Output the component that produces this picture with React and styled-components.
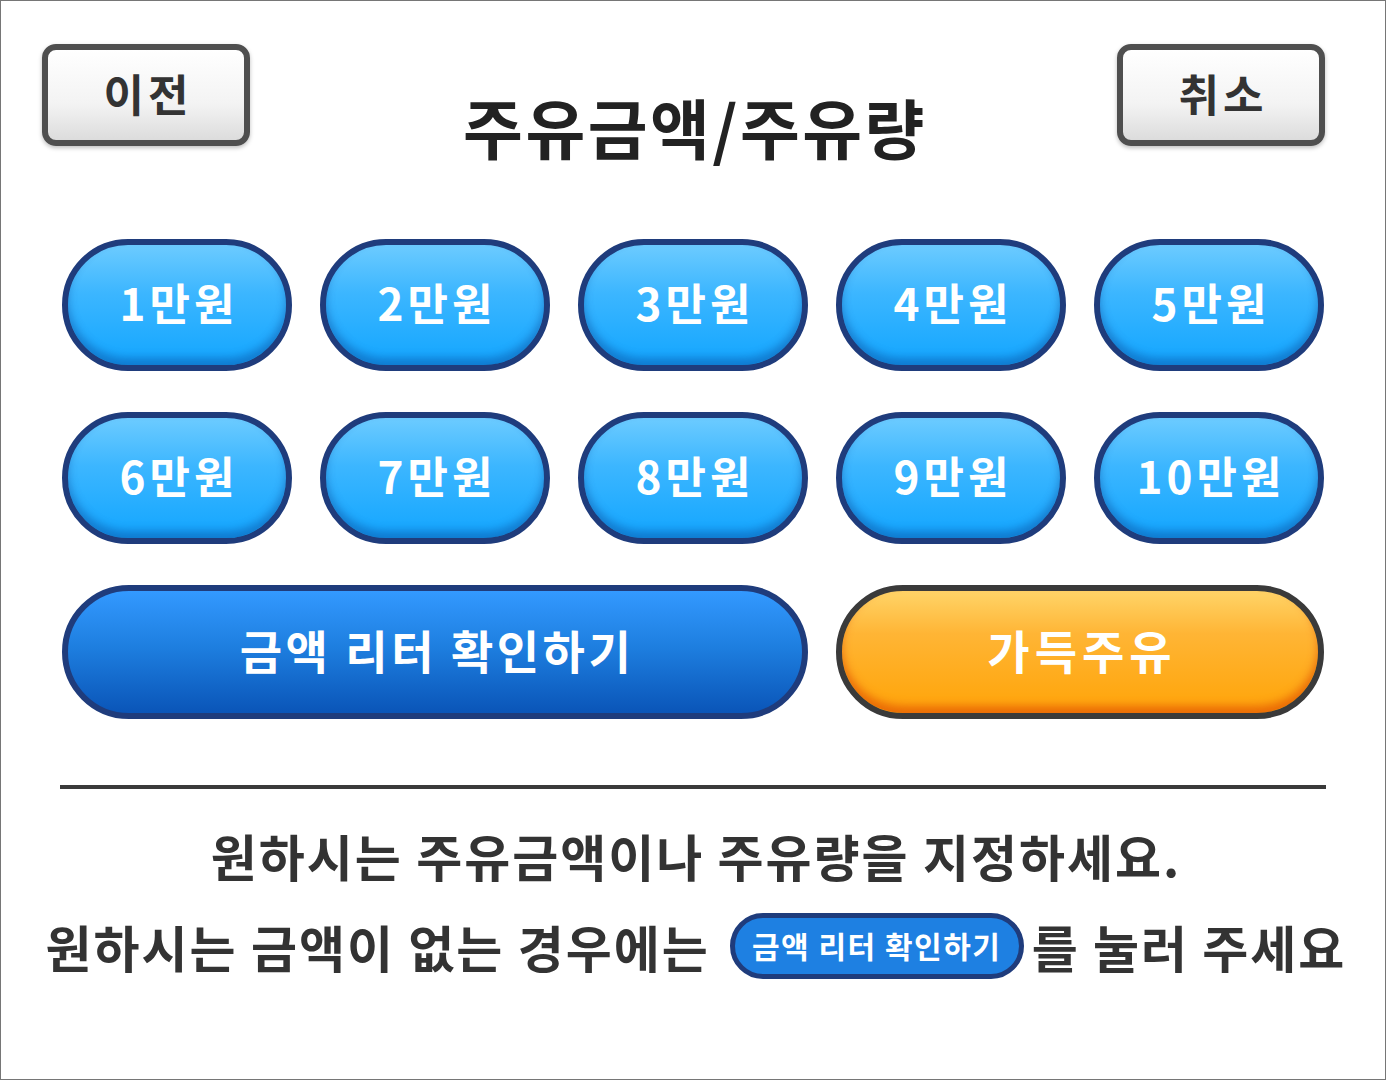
import React from "react";
import styled, { createGlobalStyle } from "styled-components";

const GlobalStyle = createGlobalStyle`
  html, body {
    margin: 0;
    padding: 0;
    background: #ffffff;
  }
  * {
    box-sizing: border-box;
  }
`;

const AMOUNTS = [1, 2, 3, 4, 5, 6, 7, 8, 9, 10];

function App() {
  return (
    <>
      <GlobalStyle />
      <Screen>
        <Header>
          <NavButton>이전</NavButton>
          <Title>주유금액/주유량</Title>
          <NavButton>취소</NavButton>
        </Header>

        <ButtonGrid>
          {AMOUNTS.map((n) => (
            <AmountButton key={n}>{n}만원</AmountButton>
          ))}
          <ConfirmButton>금액 리터 확인하기</ConfirmButton>
          <FullButton>가득주유</FullButton>
        </ButtonGrid>

        <Divider />

        <Guide>
          <GuideLine>원하시는 주유금액이나 주유량을 지정하세요.</GuideLine>
          <GuideLine>
            원하시는 금액이 없는 경우에는
            <InlinePill>금액 리터 확인하기</InlinePill>
            를 눌러 주세요
          </GuideLine>
        </Guide>
      </Screen>
    </>
  );
}

export default App;

const Screen = styled.div`
  width: 1386px;
  height: 1080px;
  border: 1px solid #767676;
  background: #ffffff;
  font-family: "Noto Sans CJK KR", "Noto Sans", sans-serif;
  display: flex;
  flex-direction: column;
`;

const Header = styled.div`
  display: grid;
  grid-template-columns: 208px 1fr 208px;
  align-items: start;
  padding: 43px 60px 0 41px;
`;

const NavButton = styled.button`
  height: 102px;
  width: 208px;
  border: 6px solid #4f4f4f;
  border-radius: 14px;
  background: linear-gradient(to bottom, #ffffff 0%, #f3f3f3 60%, #dcdcdc 100%);
  box-shadow: 0 2px 4px rgba(0, 0, 0, 0.25);
  font-family: inherit;
  font-size: 44px;
  font-weight: 700;
  letter-spacing: 4px;
  color: #333333;
  padding: 0 0 4px 4px;
  cursor: pointer;
`;

const Title = styled.h1`
  margin: 44px 0 0;
  padding-left: 23px;
  text-align: center;
  font-size: 65px;
  line-height: 76px;
  font-weight: 700;
  color: #222222;
  letter-spacing: 2.5px;
`;

const ButtonGrid = styled.div`
  display: grid;
  grid-template-columns: repeat(5, 230px);
  grid-auto-rows: 132px;
  column-gap: 28px;
  row-gap: 41px;
  margin: 75px 0 0 61px;
`;

const PillButton = styled.button`
  border-radius: 999px;
  font-family: inherit;
  font-weight: 700;
  color: #ffffff;
  cursor: pointer;
  padding: 0 0 6px 4px;
`;

const AmountButton = styled(PillButton)`
  border: 6px solid #1f3c7c;
  background: linear-gradient(to bottom, #6ccbff 0%, #3cb6ff 40%, #13a6ff 100%);
  box-shadow: inset 0 -7px 8px rgba(10, 70, 150, 0.45);
  font-size: 44px;
  letter-spacing: 4px;
`;

const ConfirmButton = styled(PillButton)`
  grid-column: span 3;
  height: 134px;
  border: 6px solid #1f3c7c;
  background: linear-gradient(to bottom, #3399ff 0%, #1e7fe0 45%, #0a55b8 100%);
  font-size: 46px;
  letter-spacing: 3.5px;
`;

const FullButton = styled(PillButton)`
  grid-column: span 2;
  height: 134px;
  border: 6px solid #3a3a3a;
  background: linear-gradient(to bottom, #ffd468 0%, #ffb535 35%, #ffa812 85%, #ffa40c 100%);
  box-shadow: inset 0 -7px 8px rgba(220, 70, 0, 0.6);
  font-size: 46px;
  letter-spacing: 5px;
`;

const Divider = styled.hr`
  margin: 68px 59px 0 59px;
  height: 4px;
  border: none;
  background: #3a3a3a;
`;

const Guide = styled.div`
  display: flex;
  flex-direction: column;
  align-items: center;
  gap: 28px;
  margin-top: 36px;
  padding-left: 6px;
`;

const GuideLine = styled.p`
  margin: 0;
  display: flex;
  align-items: center;
  font-size: 50px;
  line-height: 60px;
  font-weight: 700;
  color: #333333;
  letter-spacing: 2px;
  white-space: pre;
`;

const InlinePill = styled.span`
  display: inline-flex;
  align-items: center;
  justify-content: center;
  height: 66px;
  width: 294px;
  margin: 0 8px 0 20px;
  border: 5px solid #1f3c7c;
  border-radius: 999px;
  background: #1e80e2;
  color: #ffffff;
  font-size: 30px;
  letter-spacing: 1.5px;
  padding-bottom: 2px;
`;
